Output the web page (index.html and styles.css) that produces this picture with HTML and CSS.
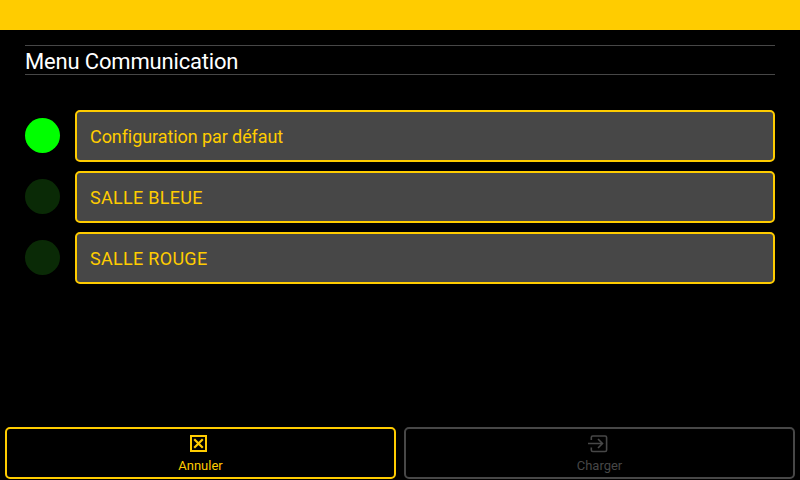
FILE: index.html
```html
<!DOCTYPE html>
<html lang="fr">
<head>
<meta charset="utf-8">
<title>Menu Communication</title>
<link rel="stylesheet" href="styles.css">
</head>
<body>
<div class="screen">
  <header class="topbar"></header>
  <main class="content">
    <h1 class="title">Menu Communication</h1>
    <ul class="list">
      <li class="row"><span class="led led-on"></span><button class="item">Configuration par défaut</button></li>
      <li class="row"><span class="led"></span><button class="item item-caps">SALLE BLEUE</button></li>
      <li class="row"><span class="led"></span><button class="item item-caps">SALLE ROUGE</button></li>
    </ul>
  </main>
  <footer class="footer">
    <button class="action">
      <svg class="icon" width="21" height="18" viewBox="0 0 21 18" fill="none" stroke="currentColor" stroke-width="2">
        <rect x="1" y="1" width="15" height="15"/>
        <path d="M5 5l7 7M12 5l-7 7" stroke-width="2.2" stroke-linecap="square"/>
      </svg>
      <span>Annuler</span>
    </button>
    <button class="action action-off">
      <svg class="icon" width="23" height="18" viewBox="0 0 23 18" fill="none" stroke="currentColor" stroke-width="1.6">
        <path d="M3.3 5V2.5A1.5 1.5 0 0 1 4.8 1h12.3a1.5 1.5 0 0 1 1.5 1.5v12.5a1.5 1.5 0 0 1-1.5 1.5H4.8a1.5 1.5 0 0 1-1.5-1.5V12.500"/>
        <path d="M0 8.500h14.500M10 4l4.500 4.500L10 13"/>
      </svg>
      <span>Charger</span>
    </button>
  </footer>
</div>
</body>
</html>
```
FILE: styles.css
```css
* { box-sizing: border-box; }
html, body { margin: 0; padding: 0; }
body { background: #000; font-family: Roboto, "Liberation Sans", sans-serif; }
.screen { width: 800px; height: 480px; display: flex; flex-direction: column; overflow: hidden; background: #000; }
.topbar { height: 30px; background: #ffcc00; flex: none; }
.content { flex: 1; padding: 15px 25px 0; }
.title {
  margin: 0; height: 30px; padding-top: 2px;
  border-top: 1px solid #474747; border-bottom: 1px solid #474747;
  color: #fff; font-size: 22px; font-weight: 400; line-height: 28px; letter-spacing: -0.17px;
}
.list { list-style: none; margin: 35px 0 0; padding: 0; display: flex; flex-direction: column; gap: 9px; }
.row { display: flex; align-items: center; gap: 15px; }
.led { width: 35px; height: 35px; border-radius: 50%; background: #0a2a06; flex: none; margin-top: -2px; }
.led-on { background: #00ff00; }
.item {
  flex: 1; height: 52px; padding: 0 13px; text-align: left;
  background: #474747; border: 2px solid #ffcc00; border-radius: 5px;
  color: #ffcc00; font-family: inherit; font-size: 18px; letter-spacing: -0.08px;
}
.item-caps { letter-spacing: 0.3px; }
.footer { display: flex; gap: 8px; padding: 0 5px 1px; flex: none; }
.action {
  flex: 1; height: 52px; padding: 6px 0 0;
  display: flex; flex-direction: column; align-items: center; gap: 5px;
  background: #000; border: 2px solid #ffcc00; border-radius: 5px;
  color: #ffcc00; font-family: inherit; font-size: 13px; line-height: 16px;
}
.action-off { border-color: #474747; color: #474747; }
.icon { display: block; flex: none; }
```
